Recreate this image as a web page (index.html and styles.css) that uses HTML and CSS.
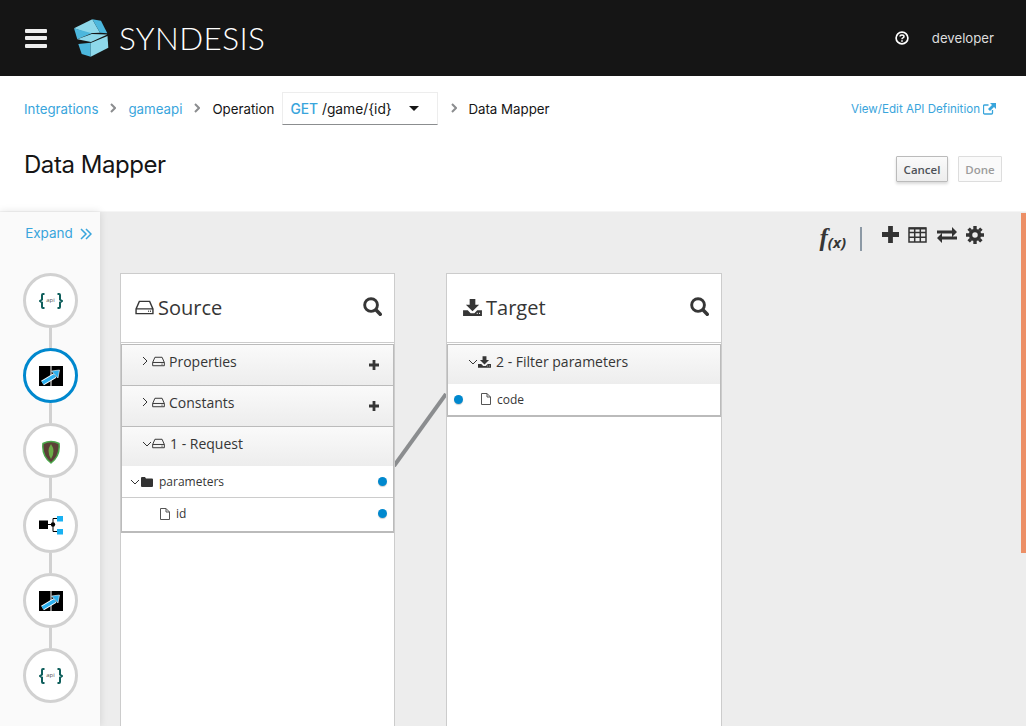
FILE: index.html
```html
<!DOCTYPE html>
<html lang="en">
<head>
    <title>Syndesis - Data Mapper</title>
    <link rel="stylesheet" href="styles.css">
</head>
<body>
    <svg class="defs" width="0" height="0">
        <symbol id="hdd" viewBox="0 0 20 16"><path d="M4.500 1.500h11l3.500 8v5H1v-5zM1 9.500h18M14 12h.9M16 12h.9" fill="none" stroke="currentColor" stroke-width="1.500"/></symbol>
        <symbol id="download" viewBox="0 0 20 18"><path d="M7 0h6v6h4l-7 7-7-7h4zM0 12h5l3 3h4l3-3h5v6H0z" fill="currentColor"/><path d="M14.500 15.200h1M17 15.200h1" stroke="#fff" stroke-width="1.400"/></symbol>
        <symbol id="file" viewBox="0 0 10 12"><path d="M.5.5h5.500l3.500 3.500v7.500h-9zM6 .5v3.500h3.500" fill="none" stroke="#555" stroke-width="1"/></symbol>
        <symbol id="search" viewBox="0.300 0.300 17 17"><circle cx="7.500" cy="7.500" r="5.700" fill="none" stroke="currentColor" stroke-width="2.600"/><path d="M11.800 11.800l5 5" stroke="currentColor" stroke-width="3.200"/></symbol>
        <symbol id="plus" viewBox="0 0 10 10"><path d="M3.600 0h2.800v3.600H10v2.800H6.400V10H3.600V6.400H0V3.600h3.600z" fill="currentColor"/></symbol>
        <symbol id="braces" viewBox="0 0 24 16"><path d="M5.500 1H4Q3 1 3 2v4.500L1 8l2 1.500V14q0 1 1 1h1.500M18.500 1H20q1 0 1 1v4.500L23 8l-2 1.500V14q0 1-1 1h-1.500" fill="none" stroke="#0f5f5c" stroke-width="2"/></symbol>
        <symbol id="mapper" viewBox="0 0 24 20"><path d="M0 0h11.500v20H0zM12.500 0H24v20H12.500z" fill="#000"/><path d="M3.500 17L16 9.500" stroke="#fff" stroke-width="5.500"/><path d="M3.500 17L16 9.500" stroke="#2cb0ef" stroke-width="3.500"/><path d="M12.500 5l8-1-1.500 8z" fill="#2cb0ef" stroke="#fff" stroke-width=".6"/></symbol>
    </svg>

    <header class="topbar">
        <div class="bars"><span></span><span></span><span></span></div>
        <svg class="logo" viewBox="0 0 35 38" width="35" height="38">
            <path d="M0 9.300L18.300.3 26 13.700l-12 .6z" fill="#8ed8ea"/>
            <path d="M18.300.3L27 1.700l6.300 12.600-7.300-.6z" fill="#4cb7dd"/>
            <path d="M0 9.300l17.700 5-14.400 6z" fill="#4cb7dd"/>
            <path d="M3.300 20.300L17.700 15l15.600.5L17 23z" fill="#8ed8ea"/>
            <path d="M4.300 25l12.400-1.300v14L7.700 35z" fill="#4cb7dd"/>
            <path d="M16.700 24l16.800-7 .8 11.700-17.600 9z" fill="#8ed8ea"/>
        </svg>
        <span class="brand">SYNDESIS</span>
        <div class="user">
            <svg class="help" viewBox="0 0 14 14" width="14" height="14"><circle cx="7" cy="7" r="5.900" fill="none" stroke="#fff" stroke-width="1.700"/><path d="M5 5.600Q5 3.900 7 3.900T9 5.500Q9 6.400 7.900 6.900 7 7.300 7 8.200" fill="none" stroke="#fff" stroke-width="1.500"/><path d="M6.200 9.200h1.600v1.500H6.200z" fill="#fff"/></svg>
            <span>developer</span>
        </div>
    </header>

    <section class="page-head">
        <div class="crumb-row">
            <nav class="crumbs">
                <a>Integrations</a>
                <svg class="sep" viewBox="0 0 6 10" width="6" height="10"><path d="M1 1l4 4-4 4" fill="none" stroke="#8b8d8f" stroke-width="2"/></svg>
                <a>gameapi</a>
                <svg class="sep" viewBox="0 0 6 10" width="6" height="10"><path d="M1 1l4 4-4 4" fill="none" stroke="#8b8d8f" stroke-width="2"/></svg>
                <span class="crumb-op">Operation</span>
                <div class="op-select">
                    <span><b>GET</b> /game/{id}</span>
                    <i class="caret"></i>
                </div>
                <svg class="sep" viewBox="0 0 6 10" width="6" height="10"><path d="M1 1l4 4-4 4" fill="none" stroke="#8b8d8f" stroke-width="2"/></svg>
                <span>Data Mapper</span>
            </nav>
            <a class="api-link">View/Edit API Definition
                <svg viewBox="0 0 13 12" width="13" height="12"><path d="M9.500 7v3q0 1-1 1h-7q-1 0-1-1V3q0-1 1-1h4" fill="none" stroke="#39a5dc" stroke-width="1.300"/><path d="M7 0h6v6l-2-2-4 4-2-2 4-4z" fill="#39a5dc"/></svg>
            </a>
        </div>
        <div class="title-row">
            <h1>Data Mapper</h1>
            <div class="actions">
                <button class="btn">Cancel</button>
                <button class="btn off">Done</button>
            </div>
        </div>
    </section>

    <div class="workspace">
        <aside class="sidebar">
            <a class="expand">Expand
                <svg viewBox="0 0 12 12" width="12" height="12"><path d="M1 1l5 5-5 5M6 1l5 5-5 5" fill="none" stroke="#39a5dc" stroke-width="1.500"/></svg>
            </a>
            <div class="step api"><svg width="24" height="16"><use href="#braces"/></svg><span>api</span></div>
            <div class="link"></div>
            <div class="step active"><svg width="24" height="20"><use href="#mapper"/></svg></div>
            <div class="link"></div>
            <div class="step">
                <svg class="shield" viewBox="0 0 18 24" width="18" height="24"><path d="M1 3.500Q9 -.5 17 3.500 18.500 16 9 23 -.5 16 1 3.500z" fill="#5b3f36" stroke="#4aa74a" stroke-width="1.500"/><path d="M9 4q5 7 0 15-5-8 0-15z" fill="#6cac48"/></svg>
            </div>
            <div class="link"></div>
            <div class="step">
                <svg viewBox="0 0 24 19" width="24" height="19"><path d="M0 4.500h9v8.500H0z" fill="#000"/><path d="M9 8.500h5M14 8.500V2.500h4M14 8.500V15.500h4" fill="none" stroke="#000" stroke-width="1"/><circle cx="14" cy="8.500" r="2.200" fill="#000"/><path d="M18 0h6v5.500h-6zM18 13h6v5.500h-6z" fill="#19b1f2"/></svg>
            </div>
            <div class="link"></div>
            <div class="step"><svg width="24" height="20"><use href="#mapper"/></svg></div>
            <div class="link"></div>
            <div class="step api"><svg width="24" height="16"><use href="#braces"/></svg><span>api</span></div>
        </aside>

        <main class="mapper">
            <div class="toolbar">
                <span class="fx">f<small>(x)</small></span>
                <span class="tool-sep"></span>
                <svg class="tool tool-plus" width="17" height="17"><use href="#plus"/></svg>
                <svg class="tool tool-table" viewBox="0 0 19 16" width="19" height="16"><path d="M1 1h17v14H1zM1 5.500h17M1 10.200h17M6.700 1v14M12.300 1v14" fill="none" stroke="#333" stroke-width="1.500"/><path d="M1 .5h17v2H1z" fill="#333"/></svg>
                <svg class="tool" viewBox="0 0 20 16" width="20" height="16"><path d="M0 3.500h15V0l5 5-5 5V6.500H0zM20 9.500v3H5V16l-5-5 5-5v3.500z" fill="#333"/></svg>
                <svg class="tool" viewBox="0 0 18 18" width="18" height="18"><circle cx="9" cy="9" r="4.500" fill="none" stroke="#333" stroke-width="3.500"/><path d="M9 0v18M0 9h18M2.600 2.600l12.800 12.800M15.400 2.600L2.600 15.400" stroke="#333" stroke-width="3.400" stroke-dasharray="3 12 3 0"/></svg>
            </div>

            <div class="panels">
                <svg class="wire" width="53" height="74" viewBox="0 0 53 74"><path d="M0 73L52 1" stroke="#8b8d8f" stroke-width="4"/></svg>

                <div class="panel">
                    <div class="panel-head">
                        <svg class="head-icon" width="19" height="15"><use href="#hdd"/></svg>
                        <span class="panel-title">Source</span>
                        <svg class="search" width="19" height="19"><use href="#search"/></svg>
                    </div>
                    <div class="tree">
                        <div class="doc closed">
                            <svg class="chev" viewBox="0 0 6 10" width="6" height="10"><path d="M1 1l4 4-4 4" fill="none" stroke="#333" stroke-width="1"/></svg>
                            <svg class="doc-icon" width="13" height="11"><use href="#hdd"/></svg>
                            <span>Properties</span>
                            <svg class="add" width="10" height="10"><use href="#plus"/></svg>
                        </div>
                        <div class="doc closed">
                            <svg class="chev" viewBox="0 0 6 10" width="6" height="10"><path d="M1 1l4 4-4 4" fill="none" stroke="#333" stroke-width="1"/></svg>
                            <svg class="doc-icon" width="13" height="11"><use href="#hdd"/></svg>
                            <span>Constants</span>
                            <svg class="add" width="10" height="10"><use href="#plus"/></svg>
                        </div>
                        <div class="doc open">
                            <svg class="chev-down" viewBox="0 0 10 6" width="10" height="6"><path d="M1 1l4 4 4-4" fill="none" stroke="#333" stroke-width="1"/></svg>
                            <svg class="doc-icon" width="13" height="11"><use href="#hdd"/></svg>
                            <span>1 - Request</span>
                        </div>
                        <div class="field parent">
                            <svg class="chev-down" viewBox="0 0 10 6" width="10" height="6"><path d="M1 1l4 4 4-4" fill="none" stroke="#333" stroke-width="1"/></svg>
                            <svg class="folder" viewBox="0 0 12 10" width="12" height="10"><path d="M0 1q0-1 1-1h3l1 1.500h6q1 0 1 1V9q0 1-1 1H1q-1 0-1-1z" fill="#333"/></svg>
                            <span>parameters</span>
                            <i class="dot right"></i>
                        </div>
                        <div class="field child">
                            <svg width="10" height="12"><use href="#file"/></svg>
                            <span>id</span>
                            <i class="dot right"></i>
                        </div>
                    </div>
                </div>

                <div class="panel target">
                    <div class="panel-head">
                        <svg class="head-icon" width="19" height="17"><use href="#download"/></svg>
                        <span class="panel-title">Target</span>
                        <svg class="search" width="19" height="19"><use href="#search"/></svg>
                    </div>
                    <div class="tree">
                        <div class="doc open">
                            <svg class="chev-down" viewBox="0 0 10 6" width="10" height="6"><path d="M1 1l4 4 4-4" fill="none" stroke="#333" stroke-width="1"/></svg>
                            <svg class="doc-icon" width="13" height="12"><use href="#download"/></svg>
                            <span>2 - Filter parameters</span>
                        </div>
                        <div class="field target-field">
                            <i class="dot"></i>
                            <svg width="10" height="12"><use href="#file"/></svg>
                            <span>code</span>
                        </div>
                    </div>
                </div>
            </div>
            <div class="scroll-thumb"></div>
        </main>
    </div>
</body>
</html>
```

FILE: styles.css
```css
* {
    box-sizing: border-box;
}
html,
body {
    margin: 0;
    height: 726px;
    overflow: hidden;
}
body {
    display: flex;
    flex-direction: column;
    font-family: "Inter", "Liberation Sans", sans-serif;
    color: #151515;
    background-color: #fff;
}
.defs {
    position: absolute;
}
a {
    color: #39a5dc;
}

/* top bar */
.topbar {
    height: 76px;
    flex: none;
    display: flex;
    align-items: center;
    padding: 0 32px 0 25px;
    background-color: #151515;
}
.bars {
    width: 22px;
    display: flex;
    flex-direction: column;
    gap: 3.5px;
    margin-right: 27px;
}
.bars span {
    height: 4px;
    border-radius: 1px;
    background-color: #eee;
}
.logo {
    flex: none;
}
.brand {
    margin-left: 10px;
    font-family: "Lato", sans-serif;
    font-weight: 300;
    font-size: 31.5px;
    letter-spacing: .4px;
    color: #fff;
}
.user {
    margin-left: auto;
    display: flex;
    align-items: center;
    gap: 23px;
    font-size: 13.2px;
    color: #ddd;
}

/* breadcrumb and title */
.page-head {
    height: 136px;
    flex: none;
    padding: 16px 24px 0;
    border-bottom: 1px solid #f5f5f5;
}
.crumb-row {
    display: flex;
    align-items: center;
    justify-content: space-between;
    margin-right: 6px;
}
.crumbs {
    display: flex;
    align-items: center;
    font-size: 13.3px;
}
.sep {
    margin: 0 12px 2px;
}
.crumb-op {
    margin-right: 8px;
}
.op-select {
    width: 156px;
    height: 33px;
    display: flex;
    align-items: center;
    justify-content: space-between;
    padding: 0 18px 0 7px;
    font-size: 13.8px;
    border: 1px solid #ededed;
    border-bottom-color: #8b8d8f;
}
.op-select b {
    font-weight: 500;
    color: #39a5dc;
}
.op-select + .sep {
    margin-left: 13px;
    margin-right: 11px;
}
.caret {
    width: 0;
    height: 0;
    border-left: 5px solid transparent;
    border-right: 5px solid transparent;
    border-top: 5px solid #151515;
}
.api-link {
    display: flex;
    align-items: center;
    gap: 3px;
    font-size: 11.6px;
}
.title-row {
    display: flex;
    align-items: flex-start;
    justify-content: space-between;
    margin-top: 25px;
}
h1 {
    margin: 0;
    font-size: 24px;
    font-weight: 400;
    letter-spacing: -.45px;
}
.actions {
    display: flex;
    gap: 10px;
    margin-top: 6px;
}
.btn {
    width: 52px;
    height: 26px;
    padding: 0;
    font-family: "Open Sans", sans-serif;
    font-size: 11.5px;
    font-weight: 600;
    color: #4d5258;
    border: 1px solid #bbb;
    border-radius: 1px;
    background: linear-gradient(#fafafa, #ededed);
    box-shadow: 0 2px 3px rgba(0, 0, 0, .15);
}
.btn.off {
    width: 44px;
    color: #9c9c9c;
    border-color: #ddd;
    background: #fafafa;
    box-shadow: none;
}

/* left step list */
.workspace {
    flex: 1;
    display: flex;
    min-height: 0;
}
.sidebar {
    width: 100px;
    flex: none;
    display: flex;
    flex-direction: column;
    align-items: center;
    background-color: #fafafa;
    box-shadow: 0 0 8px rgba(0, 0, 0, .12);
    z-index: 1;
}
.expand {
    height: 61px;
    padding: 13px 0 0 17px;
    display: flex;
    align-items: flex-start;
    gap: 7px;
    font-size: 13.5px;
}
.expand svg {
    margin-top: 3px;
}
.step {
    position: relative;
    width: 55px;
    height: 55px;
    flex: none;
    margin-left: 1px;
    display: flex;
    align-items: center;
    justify-content: center;
    border: 3px solid #d1d1d1;
    border-radius: 50%;
    background-color: #fff;
}
.step.active {
    border-color: #0088ce;
}
.step.api span {
    position: absolute;
    left: 0;
    right: 0;
    top: 20px;
    text-align: center;
    font-family: "Open Sans", sans-serif;
    font-size: 6px;
    line-height: 8px;
    color: #555;
}
.shield {
    margin-top: 3px;
}
.link {
    width: 3px;
    height: 20px;
    flex: none;
    margin-left: 1px;
    background-color: #d1d1d1;
}

/* mapper area */
.mapper {
    position: relative;
    flex: 1;
    min-width: 0;
    display: flex;
    flex-direction: column;
    padding: 0 0 0 20px;
    font-family: "Open Sans", sans-serif;
    color: #363636;
    background-color: #ededed;
}
.toolbar {
    height: 61px;
    flex: none;
    display: flex;
    align-items: center;
    gap: 9px;
    padding: 0 42px 16px 0;
    justify-content: flex-end;
}
.fx {
    margin-top: 6px;
    font-family: "Liberation Serif", serif;
    font-size: 25px;
    font-weight: 700;
    font-style: italic;
    line-height: 1;
}
.fx small {
    font-size: 15px;
    font-family: "Open Sans", sans-serif;
    vertical-align: -2px;
}
.tool-sep {
    width: 2px;
    height: 24px;
    margin: 9px 11px 0 5px;
    background-color: #8c99a5;
}
.tool-plus {
    color: #333;
}
.tool-table {
    margin-right: 1px;
}
.panels {
    position: relative;
    flex: 1;
    display: flex;
    gap: 51px;
    min-height: 0;
}
.wire {
    position: absolute;
    left: 274px;
    top: 120px;
}
.panel {
    width: 275px;
    background-color: #fff;
    border: 1px solid #ccc;
    border-bottom: 0;
    position: relative;
}
.panel.target {
    width: 276px;
}
.panel-head {
    height: 69px;
    display: flex;
    align-items: center;
    padding: 0 12px 2px 14px;
    border-bottom: 1px solid #ccc;
}
.target .panel-head {
    padding-left: 16px;
}
.head-icon {
    margin-right: 4px;
}
.panel-title {
    font-size: 20px;
}
.search {
    margin-left: auto;
    margin-bottom: 2px;
}
.tree {
    margin-top: 1px;
    border: 1px solid #bbb;
    border-bottom-width: 2px;
}
.doc {
    height: 41px;
    display: flex;
    align-items: center;
    padding: 0 14px 8px 20px;
    font-size: 14px;
    border-bottom: 1px solid #bbb;
    background: linear-gradient(#fafafa, #ededed);
}
.doc.open {
    height: 39px;
    padding-bottom: 6px;
    border-bottom: 0;
}
.doc-icon {
    margin: 0 4px 0 3px;
}
.doc.open .doc-icon {
    margin: 0 5px 0 0;
}
.chev {
    margin-right: 1px;
}
.add {
    margin-left: auto;
    margin-top: 8px;
}
.field {
    display: flex;
    align-items: center;
    height: 32px;
    font-size: 12px;
    border-bottom: 1px solid #ccc;
}
.field:last-child {
    border-bottom: 0;
}
.parent {
    height: 32px;
    padding-left: 8px;
}
.parent .folder {
    margin: 0 6px 0 1px;
}
.child {
    height: 33px;
    padding-left: 38px;
    padding-bottom: 2px;
}
.child span {
    margin-left: 6px;
}
.target-field {
    height: 31px;
    padding-left: 6px;
    padding-bottom: 1px;
}
.target-field svg {
    margin: 0 6px 0 18px;
}
.dot {
    width: 9px;
    height: 9px;
    border-radius: 50%;
    background-color: #0088ce;
    box-shadow: 0 1px 1px rgba(0, 0, 0, .2);
}
.dot.right {
    margin-left: auto;
    margin-right: 6px;
}
.scroll-thumb {
    position: absolute;
    right: 0;
    top: 1px;
    width: 5px;
    height: 340px;
    background-color: #ec8f66;
}
```
